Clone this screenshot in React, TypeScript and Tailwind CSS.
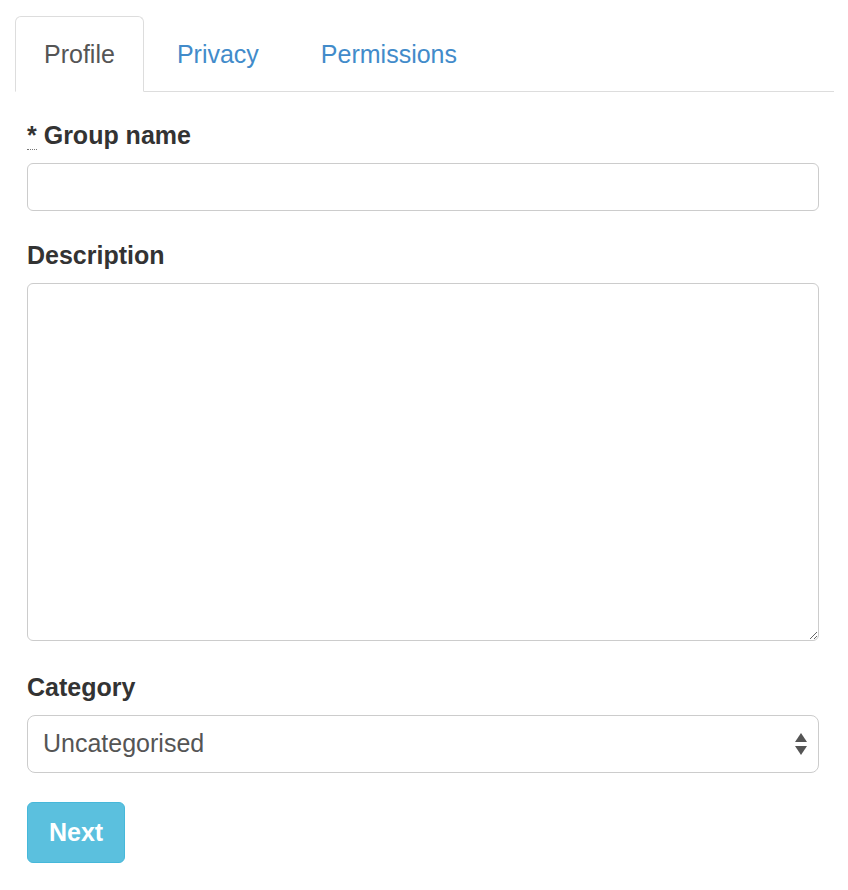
import React from 'react';

function SelectArrows() {
  return (
    <svg width="14" height="24" viewBox="0 0 14 24" className="pointer-events-none absolute right-[11px] top-1/2 -translate-y-1/2">
      <path d="M7 1 L13 10 L1 10 Z" fill="#555" />
      <path d="M1 14 L13 14 L7 23 Z" fill="#555" />
    </svg>
  );
}

export default function App() {
  const tabs = ['Profile', 'Privacy', 'Permissions'];

  return (
    <div className="min-h-screen bg-white pl-[15px] pr-[14px] pt-[16px] text-[25px] text-[#333]" style={{ fontFamily: '"Liberation Sans", Arial, sans-serif' }}>
      <ul className="flex border-b border-[#ddd]">
        {tabs.map((tab, i) => (
          <li key={tab} className="-mb-px mr-[4px]">
            {i === 0 ? (
              <span className="block rounded-t-[6px] border border-[#ddd] border-b-white bg-white px-[28px] py-[19px] leading-[36px] text-[#555]">
                {tab}
              </span>
            ) : (
              <a href="#" className="block border border-transparent px-[28px] py-[19px] leading-[36px] text-[#428bca]">
                {tab}
              </a>
            )}
          </li>
        ))}
      </ul>

      <form className="pl-[12px] pr-[15px] pt-[26px]" onSubmit={(e) => e.preventDefault()}>
        <div className="mb-[27px]">
          <label className="mb-[11px] block font-bold leading-[34px]">
            <abbr title="required" className="border-b border-dotted border-[#777] no-underline">*</abbr> Group name
          </label>
          <input type="text" className="block h-[48px] w-full rounded-[6px] border border-[#ccc] px-[16px] text-[#555] outline-none" />
        </div>

        <div className="mb-[29px]">
          <label className="mb-[11px] block font-bold leading-[34px]">Description</label>
          <textarea className="block h-[358px] w-full rounded-[6px] border border-[#ccc] px-[16px] text-[#555] outline-none" />
        </div>

        <div className="mb-[29px]">
          <label className="mb-[11px] block font-bold leading-[34px]">Category</label>
          <div className="relative">
            <select className="block h-[58px] w-full appearance-none rounded-[8px] border border-[#ccc] bg-white pl-[15px] text-[25px] text-[#555] outline-none">
              <option>Uncategorised</option>
            </select>
            <SelectArrows />
          </div>
        </div>

        <button type="submit" className="h-[61px] rounded-[6px] border border-[#46b8da] bg-[#5bc0de] px-[21px] font-bold text-white">
          Next
        </button>
      </form>
    </div>
  );
}
